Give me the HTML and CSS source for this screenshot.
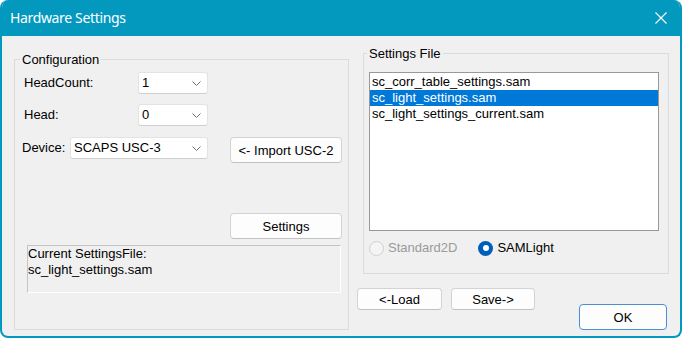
FILE: index.html
```html
<!DOCTYPE html>
<html lang="en">
<head>
    <meta charset="UTF-8">
    <title>Hardware Settings</title>
    <link rel="stylesheet" href="styles.css">
</head>
<body>
    <div class="window">
        <div class="titlebar">
            <span class="title">Hardware Settings</span>
            <svg class="close" width="12" height="12" viewBox="0 0 12 12">
                <path d="M0.5 0.5 L11.5 11.5 M11.5 0.5 L0.5 11.5" stroke="#ffffff" stroke-width="1.1" fill="none"/>
            </svg>
        </div>

        <div class="content">
            <div class="group config">
                <span class="group-title">Configuration</span>

                <div class="row row-count">
                    <label class="label">HeadCount:</label>
                    <div class="combo combo-small">
                        <span>1</span>
                        <svg class="chevron" width="9" height="5" viewBox="0 0 9 5"><path d="M0.5 0.5 L4.5 4.5 L8.5 0.5" stroke="#707070" fill="none"/></svg>
                    </div>
                </div>

                <div class="row row-head">
                    <label class="label">Head:</label>
                    <div class="combo combo-small">
                        <span>0</span>
                        <svg class="chevron" width="9" height="5" viewBox="0 0 9 5"><path d="M0.5 0.5 L4.5 4.5 L8.5 0.5" stroke="#707070" fill="none"/></svg>
                    </div>
                </div>

                <div class="row row-device">
                    <label class="label label-device">Device:</label>
                    <div class="combo combo-wide">
                        <span>SCAPS USC-3</span>
                        <svg class="chevron" width="9" height="5" viewBox="0 0 9 5"><path d="M0.5 0.5 L4.5 4.5 L8.5 0.5" stroke="#707070" fill="none"/></svg>
                    </div>
                    <button class="btn btn-import">&lt;- Import USC-2</button>
                </div>

                <button class="btn btn-settings">Settings</button>

                <div class="current">
                    Current SettingsFile:<br>
                    sc_light_settings.sam
                </div>
            </div>

            <div class="right">
                <div class="group files">
                    <span class="group-title">Settings File</span>

                    <ul class="listbox">
                        <li>sc_corr_table_settings.sam</li>
                        <li class="selected">sc_light_settings.sam</li>
                        <li>sc_light_settings_current.sam</li>
                    </ul>

                    <div class="radios">
                        <span class="radio disabled"><span class="dot"></span>Standard2D</span>
                        <span class="radio checked"><span class="dot"></span>SAMLight</span>
                    </div>
                </div>

                <div class="actions">
                    <button class="btn btn-load">&lt;-Load</button>
                    <button class="btn btn-save">Save-&gt;</button>
                    <button class="btn btn-ok">OK</button>
                </div>
            </div>
        </div>
    </div>
</body>
</html>
```

FILE: styles.css
```css
body {
    margin: 0;
    padding: 0;
    background-color: #ffffff;
    font-family: "Liberation Sans", Arial, sans-serif;
    font-size: 13px;
    line-height: 16px;
    color: #000000;
}
.window {
    width: 682px;
    height: 338px;
    box-sizing: border-box;
    border: 2px solid #0399bf;
    border-top: 0;
    border-radius: 8px;
    overflow: hidden;
    background-color: #f0f0f0;
}
.titlebar {
    height: 36px;
    background-color: #0399bf;
    display: flex;
    align-items: center;
    justify-content: space-between;
    padding: 0 13px 0 8px;
}
.title {
    font-family: "Noto Sans", sans-serif;
    font-size: 14px;
    line-height: 36px;
    letter-spacing: -0.35px;
    color: #ffffff;
}
.content {
    display: flex;
    align-items: flex-start;
}
.group {
    border: 1px solid #dcdcdc;
    box-sizing: border-box;
}
.group-title {
    display: block;
    width: fit-content;
    line-height: 15px;
    padding: 0 2px;
    background-color: #f0f0f0;
    margin-top: -8px;
}
.config {
    margin: 23px 0 0 12px;
    width: 335px;
    height: 271px;
}
.config .group-title {
    margin-left: 5px;
}
.row {
    display: flex;
    align-items: center;
    padding-left: 9px;
}
.row-count {
    margin-top: 5px;
}
.row-head {
    margin-top: 10px;
}
.row-device {
    margin-top: 11px;
    padding-left: 7px;
    align-items: flex-start;
}
.label {
    width: 114px;
}
.label-device {
    width: 48px;
    line-height: 22px;
}
.combo {
    height: 22px;
    box-sizing: border-box;
    background-color: #ffffff;
    border: 1px solid #e3e3e3;
    border-bottom-color: #cfcfcf;
    border-radius: 3px;
    display: flex;
    align-items: center;
    justify-content: space-between;
    padding: 0 6px 0 3px;
}
.combo-small {
    width: 70px;
}
.combo-wide {
    width: 138px;
}
.chevron {
    display: block;
    margin-top: 1px;
}
.btn {
    display: block;
    box-sizing: border-box;
    background-color: #fdfdfd;
    border: 1px solid #d3d3d3;
    border-bottom-color: #c2c2c2;
    border-radius: 4px;
    font-family: "Liberation Sans", Arial, sans-serif;
    font-size: 13px;
    color: #000000;
    padding: 0;
}
.btn-import {
    width: 112px;
    height: 26px;
    margin-left: 22px;
}
.btn-settings {
    width: 112px;
    height: 26px;
    margin: 50px 0 0 215px;
}
.current {
    width: 314px;
    height: 48px;
    box-sizing: border-box;
    margin: 6px 0 0 12px;
    border: 1px solid #ffffff;
    border-top-color: #c4c4c4;
    border-left-color: #c4c4c4;
    padding: 0 0 0 0;
}
.right {
    margin-left: 14px;
}
.files {
    margin-top: 17px;
    width: 306px;
    height: 221px;
}
.files .group-title {
    margin-left: 3px;
}
.listbox {
    list-style: none;
    margin: 11px 0 0 5px;
    padding: 1px 0 0 0;
    width: 290px;
    height: 159px;
    box-sizing: border-box;
    background-color: #ffffff;
    border: 1px solid #999999;
}
.listbox li {
    padding-left: 2px;
    height: 16px;
}
.listbox .selected {
    background-color: #0078d7;
    color: #ffffff;
}
.radios {
    display: flex;
    margin: 9px 0 0 5px;
}
.radio {
    display: flex;
    align-items: center;
    margin-right: 21px;
}
.dot {
    width: 15px;
    height: 15px;
    box-sizing: border-box;
    border-radius: 50%;
    margin-right: 4px;
}
.disabled {
    color: #9a9a9a;
}
.disabled .dot {
    border: 1px solid #cfcfcf;
    background-color: #f4f4f4;
}
.checked .dot {
    background-color: #005fb8;
    display: flex;
    align-items: center;
    justify-content: center;
}
.checked .dot::after {
    content: "";
    width: 6px;
    height: 6px;
    border-radius: 50%;
    background-color: #ffffff;
}
.actions {
    display: flex;
    align-items: flex-start;
    margin: 14px 0 0 -6px;
}
.btn-load {
    width: 85px;
    height: 22px;
}
.btn-save {
    width: 84px;
    height: 22px;
    margin-left: 9px;
}
.btn-ok {
    width: 88px;
    height: 26px;
    margin: 16px 0 0 44px;
    border: 1px solid #4a8fd6;
}
```
